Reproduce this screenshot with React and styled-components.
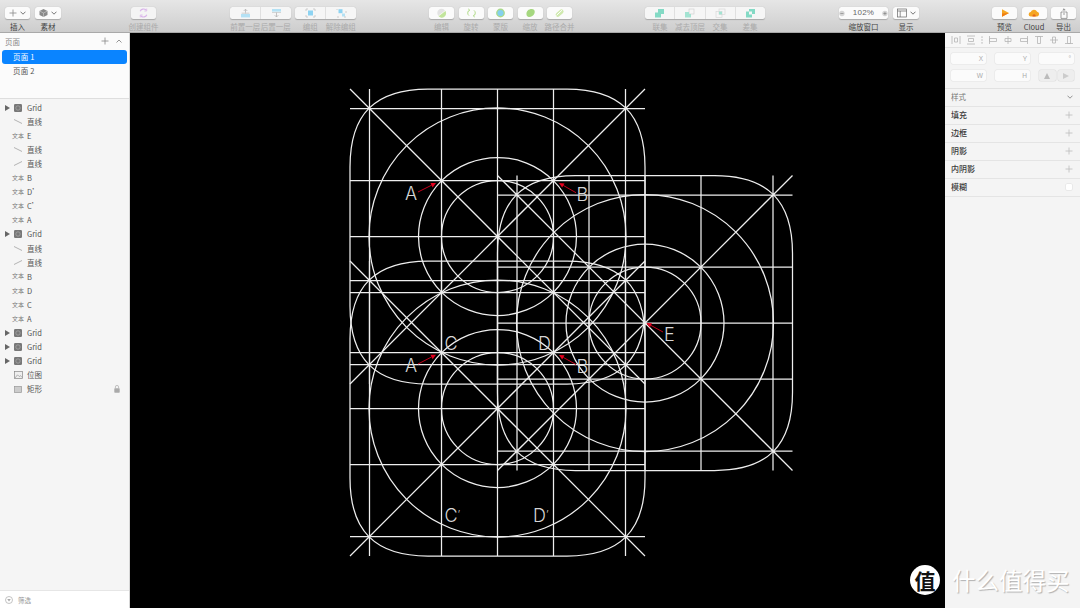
import React from 'react';
import styled, { createGlobalStyle } from 'styled-components';

const Global = createGlobalStyle`
  html, body { margin: 0; padding: 0; background: #000; overflow: hidden; }
  body { font-family: "Liberation Sans", "Noto Sans CJK SC", sans-serif; }
  * { box-sizing: border-box; }
`;

const Window = styled.div`
  width: 1080px; height: 608px; display: flex; flex-direction: column; position: relative; overflow: hidden;
`;
const Toolbar = styled.header`
  height: 33px; flex: none; display: flex; padding-left: 5px;
  background: linear-gradient(#e6e6e6, #cdcdcd);
  border-bottom: 1px solid #a9a9a9;
`;
const Tool = styled.div`
  flex: none; width: ${p => p.$w}px; margin-left: ${p => p.$ml || 0}px;
  display: flex; flex-direction: column; align-items: stretch; padding-top: 7px;
`;
const ToolButton = styled.div`
  height: 12px; display: flex; align-items: center; justify-content: center; gap: 3px;
  background: ${p => p.$dim ? '#f4f4f4' : '#fbfbfb'}; border-radius: 2.5px;
  box-shadow: 0 0.5px 1px rgba(0,0,0,.22);
`;
const Segmented = styled.div`
  height: 12px; display: flex; background: #f6f6f6; border-radius: 2.5px;
  box-shadow: 0 0.5px 1px rgba(0,0,0,.22);
`;
const Segment = styled.div`
  flex: 1; display: flex; align-items: center; justify-content: center;
  & + & { border-left: 1px solid #e0e0e0; }
`;
const ToolLabels = styled.div`
  display: flex; margin-top: 3px; height: 9px;
`;
const ToolLabel = styled.span`
  flex: 1; min-width: 0; display: flex; justify-content: center; white-space: nowrap;
  font: 7.5px/9px "Noto Sans CJK SC", sans-serif;
  color: ${p => p.$on ? '#444' : '#aaa'};
`;
const ZoomValue = styled.span`
  font: 8px/12px "Liberation Sans", sans-serif; color: #666; letter-spacing: .2px; margin: 0 5px;
`;

const Body = styled.div`
  flex: 1; min-height: 0; display: flex;
`;
const Sidebar = styled.aside`
  width: 130px; flex: none; display: flex; flex-direction: column; background: #f5f5f5;
  border-right: 1px solid #d6d6d6;
`;
const Pages = styled.section`
  height: 66px; flex: none; background: #fbfbfb; border-bottom: 1px solid #dedede; padding: 0 2px;
`;
const PagesHead = styled.div`
  height: 17px; padding: 0 5px 1px 3px; display: flex; align-items: center; justify-content: space-between;
  font: 7.5px "Noto Sans CJK SC", sans-serif; color: #888;
`;
const HeadIcons = styled.span`
  display: flex; gap: 7px; align-items: center;
`;
const PageRow = styled.div`
  height: 14px; border-radius: 3px; padding: 0 0 1px 11px;
  display: flex; align-items: center;
  font: 7.5px "Noto Sans CJK SC", sans-serif; letter-spacing: .2px;
  background: ${p => p.$active ? '#0a84ff' : 'transparent'};
  color: ${p => p.$active ? '#fff' : '#555'};
`;
const Layers = styled.div`
  flex: 1; padding-top: 1.5px; min-height: 0;
`;
const LayerRow = styled.div`
  height: 14.08px; display: flex; align-items: center; position: relative; padding-left: 5px;
`;
const Caret = styled.span`
  width: 8px; flex: none; display: flex;
`;
const LayerIcon = styled.span`
  width: 10px; margin-right: 4px; flex: none; display: flex; justify-content: center; align-items: center;
`;
const TextTag = styled.span`
  font: 6px/1 "Noto Sans CJK SC", sans-serif; color: #777; white-space: nowrap;
`;
const LayerName = styled.span`
  font: 7.5px/1 "Noto Sans CJK SC", "Liberation Sans", sans-serif; color: #555; flex: 1; white-space: nowrap;
`;
const LockSlot = styled.span`
  display: flex; margin-right: 9px;
`;
const Filter = styled.div`
  height: 18px; flex: none; background: #fff; border-top: 1px solid #e6e6e6; padding-left: 5px;
  display: flex; align-items: center; gap: 5px;
  font: 6.5px "Noto Sans CJK SC", sans-serif; color: #999;
`;

const Canvas = styled.main`
  flex: 1; background: #000; position: relative; min-width: 0;
`;
const Drawing = styled.svg`
  display: block; width: 815px; height: 575px;
`;
const LetterGroup = styled.g`
  opacity: 0.97;
`;
const Letter = styled.text`
  font-family: Inter, "Liberation Sans", sans-serif; font-weight: 300; font-size: 18px; fill: #dcdcdc;
`;
const Prime = styled.tspan`
  font-size: 11px;
`;

const Inspector = styled.aside`
  width: 135px; flex: none; background: #f4f4f4; display: flex; flex-direction: column;
`;
const AlignBar = styled.div`
  height: 15px; flex: none; border-bottom: 1px solid #e2e2e2; display: flex; align-items: center;
  padding-left: 3px; background: #f7f7f7;
`;
const AlignCell = styled.span`
  width: 15.3px; flex: none; display: flex; justify-content: center;
`;
const AlignDivider = styled.span`
  width: 6.7px; flex: none; display: flex; justify-content: center;
`;
const Geometry = styled.div`
  height: 41px; flex: none; border-bottom: 1px solid #e2e2e2; padding: 5px 6px 0 6px;
  display: grid; grid-template-columns: 35px 35px 35px; column-gap: 9px; row-gap: 6px; grid-auto-rows: 11px;
`;
const Field = styled.div`
  background: #fbfbfb; border-radius: 2px; box-shadow: 0 0 0 .5px #e3e3e3;
  display: flex; align-items: center; justify-content: flex-end; padding-right: 3px;
  font: 6.5px "Liberation Sans", sans-serif; color: #aaa;
`;
const FlipPair = styled.div`
  display: flex; gap: 2px;
`;
const FlipButton = styled.div`
  flex: 1; display: flex; align-items: center; justify-content: center; background: #eee;
  border-radius: 2px; box-shadow: 0 0 0 .5px #ddd;
`;
const PropRow = styled.div`
  height: 18px; flex: none; border-bottom: 1px solid #e4e4e4; padding: 0 7px 1.5px 6px;
  display: flex; align-items: center; justify-content: space-between;
  font: ${p => p.$head ? '400 7.5px' : '500 8px'} "Noto Sans CJK SC", sans-serif;
  color: ${p => p.$head ? '#777' : '#3a3a3a'};
`;
const Checkbox = styled.span`
  width: 6px; height: 6px; border-radius: 1px; background: #fff; box-shadow: 0 0 0 .5px #ddd; margin-right: 1px;
`;

const Badge = styled.div`
  position: absolute; left: 910px; top: 565px; width: 30px; height: 30px; border-radius: 50%;
  background: #fff; color: #111; display: flex; align-items: center; justify-content: center;
  font: 700 21px/1 "Noto Sans CJK SC", sans-serif;
`;
const Watermark = styled.div`
  position: absolute; left: 952px; top: 566px; white-space: nowrap; color: #fff;
  font: 400 23.5px/28px "Noto Sans CJK SC", sans-serif;
  text-shadow: 1px 1px 1px rgba(0,0,0,.28);
`;

const Plus = ({ c = '#bdbdbd', s = 8 }) => (
  <svg width={s} height={s} viewBox="0 0 8 8"><path d="M4 .5v7M.5 4h7" stroke={c} strokeWidth=".8" /></svg>
);
const Chevron = ({ c = '#666', up }) => (
  <svg width="6" height="4" viewBox="0 0 6 4"><path d={up ? 'M.5 3.5 3 1l2.5 2.5' : 'M.5 .7 3 3.2 5.5 .7'} fill="none" stroke={c} strokeWidth=".9" /></svg>
);
const Ic = ({ children, w = 11, h = 10 }) => <svg width={w} height={h} viewBox={`0 0 ${w} ${h}`}>{children}</svg>;

const icons = {
  box: <Ic w={9}><path d="M4.5 1 8.5 3v4l-4 2-4-2V3z" fill="#8a8a8a" /><path d="M.5 3l4 2 4-2M4.5 5v4" stroke="#ddd" strokeWidth=".5" fill="none" /></Ic>,
  symbol: <Ic><path d="M2.2 3.2A3.6 3.6 0 0 1 8 2M8.8 6.8A3.6 3.6 0 0 1 3 8" fill="none" stroke="#d9b3ea" strokeWidth="1.2" /><path d="M8.7 .6v2.4H6.4M2.3 9.4V7h2.3" fill="none" stroke="#d9b3ea" strokeWidth=".8" /></Ic>,
  forward: <Ic><rect x="1" y="6" width="9" height="3.4" fill="#b4e1f4" /><path d="M5.5 6V1.2M3.7 3l1.8-1.8L7.3 3" fill="none" stroke="#b5b5b5" strokeWidth=".8" /><rect x="1.6" y="4.6" width="7.8" height="1.2" fill="#d4d4d4" /></Ic>,
  backward: <Ic><rect x="1" y="1" width="9" height="2.6" fill="#b4e1f4" /><rect x="1" y="4" width="9" height="1" fill="#d4d4d4" /><path d="M5.5 4.6V9M3.7 7.2 5.5 9l1.8-1.8" fill="none" stroke="#b5b5b5" strokeWidth=".8" /></Ic>,
  group: <Ic><rect x="3" y="2.5" width="5" height="5" fill="#8dd3f2" /><path d="M1 1h2M8 1h2M1 9h2M8 9h2M1 1v2M10 1v2M1 7v2M10 7v2" stroke="#c4c4c4" strokeWidth=".8" fill="none" /></Ic>,
  ungroup: <Ic><rect x="2.5" y="1.2" width="4" height="4" fill="#8dd3f2" /><rect x="6" y="5.5" width="3" height="3" fill="#b4e1f4" /><path d="M1 1v1M1 9h2M10 3v2M10 9H8" stroke="#c4c4c4" strokeWidth=".8" fill="none" /></Ic>,
  edit: <Ic><circle cx="5.5" cy="5" r="4.2" fill="#e3e3e3" /><path d="M9.2 2.8A4.2 4.2 0 0 1 2.4 8z" fill="#c2e59c" /><path d="M2.4 8 9.2 2.8" stroke="#fff" strokeWidth=".7" /></Ic>,
  rotate: <Ic><path d="M3 2.4A3.3 3.3 0 0 0 3 7.6M8 2.4A3.3 3.3 0 0 1 8 7.6" fill="none" stroke="#b4dd8d" strokeWidth="1" /><path d="M2 .8l2 1.4-2 1.4M9 6.4 7 7.8l2 1.4" fill="none" stroke="#b4dd8d" strokeWidth=".8" /></Ic>,
  mask: <Ic><circle cx="5.5" cy="5" r="4.4" fill="#a9d98b" /><circle cx="5.5" cy="5" r="3.1" fill="#84d0ee" /></Ic>,
  scale: <Ic><path d="M1.5 6.5C1 3 4 .8 7 1c2.6.2 3.3 2.6 2.4 4.6C8.4 8.2 5 9.6 3 8.7 2 8.3 1.6 7.6 1.5 6.5z" fill="#a5d77f" /></Ic>,
  flatten: <Ic><rect x="1" y="3" width="9" height="4.4" rx="2.2" transform="rotate(-40 5.5 5)" fill="#cfe9ae" /><path d="M2.5 7.4 8 2.2" stroke="#fff" strokeWidth="1" /></Ic>,
  union: <Ic><path d="M4 1h6v5H7v3.4H1v-5h3z" fill="#84dac5" /></Ic>,
  subtract: <Ic><rect x="5" y="1" width="5" height="5" fill="none" stroke="#ccc" strokeWidth=".6" /><path d="M1 4h4v2h2v3.4H1z" fill="#a3e3d2" /></Ic>,
  intersect: <Ic><rect x="1" y="3.6" width="6" height="5.8" fill="none" stroke="#d4d4d4" strokeWidth=".6" /><rect x="4" y="1" width="6" height="5.4" fill="none" stroke="#d4d4d4" strokeWidth=".6" /><rect x="4" y="3.6" width="3" height="2.8" fill="#a3e3d2" /></Ic>,
  difference: <Ic><path d="M4 1h6v5H7V3.6H4zM1 3.6h3v2.8h3v3H1z" fill="#84dac5" /></Ic>,
  layout: <Ic w={10}><rect x=".5" y="1" width="9" height="8" fill="none" stroke="#666" strokeWidth=".7" /><path d="M.5 3h9M3.2 3v6" stroke="#666" strokeWidth=".7" /></Ic>,
  play: <Ic w={10} h={10}><path d="M2 1.2 9 5 2 8.8z" fill="#f5a623" /><path d="M2 5.5 9 5 2 8.8z" fill="#f17e13" /></Ic>,
  cloud: <Ic w={12} h={10}><path d="M3 8.5a2.2 2.2 0 0 1-.3-4.4 3.4 3.4 0 0 1 6.4-.3A2.4 2.4 0 0 1 9.3 8.5z" fill="#f5a623" /><path d="M4.6 8.5a1.6 1.6 0 1 1 3 0z" fill="#e8641b" /></Ic>,
  share: <Ic w={8} h={11}><path d="M1 4h1.8M5.2 4H7v6.4H1V4" fill="none" stroke="#777" strokeWidth=".7" /><path d="M4 7V.8M2.6 2.2 4 .8l1.4 1.4" fill="none" stroke="#777" strokeWidth=".7" /></Ic>,
};

const Minus = ({ plus }) => (
  <svg width="7" height="7" viewBox="0 0 7 7"><circle cx="3.5" cy="3.5" r="3.2" fill="#d4d4d4" /><path d={plus ? 'M1.6 3.5h3.8M3.5 1.6v3.8' : 'M1.6 3.5h3.8'} stroke="#777" strokeWidth=".7" /></svg>
);

const Single = ({ w, ml, label, on, dim, children }) => (
  <Tool $w={w} $ml={ml}>
    <ToolButton $dim={dim}>{children}</ToolButton>
    <ToolLabels><ToolLabel $on={on}>{label}</ToolLabel></ToolLabels>
  </Tool>
);
const Multi = ({ w, ml, items }) => (
  <Tool $w={w} $ml={ml}>
    <Segmented>{items.map(i => <Segment key={i.label}>{icons[i.icon]}</Segment>)}</Segmented>
    <ToolLabels>{items.map(i => <ToolLabel key={i.label}>{i.label}</ToolLabel>)}</ToolLabels>
  </Tool>
);

const HALF = 147.5;
const CORNER = 78;
const CTRL = 25;
const squircle = (cx, cy) => {
  const l = cx - HALF, r = cx + HALF, t = cy - HALF, b = cy + HALF;
  return `M${l + CORNER} ${t}H${r - CORNER}C${r - CTRL} ${t} ${r} ${t + CTRL} ${r} ${t + CORNER}`
    + `V${b - CORNER}C${r} ${b - CTRL} ${r - CTRL} ${b} ${r - CORNER} ${b}`
    + `H${l + CORNER}C${l + CTRL} ${b} ${l} ${b - CTRL} ${l} ${b - CORNER}`
    + `V${t + CORNER}C${l} ${t + CTRL} ${l + CTRL} ${t} ${l + CORNER} ${t}Z`;
};

const Grid = ({ cx, cy }) => {
  const offs = [-128, -56, 0, 56, 128];
  const d = [];
  offs.forEach(o => {
    d.push(`M${cx + o} ${cy - HALF}V${cy + HALF}`);
    d.push(`M${cx - HALF} ${cy + o}H${cx + HALF}`);
  });
  d.push(`M${cx - HALF} ${cy - HALF}L${cx + HALF} ${cy + HALF}`);
  d.push(`M${cx - HALF} ${cy + HALF}L${cx + HALF} ${cy - HALF}`);
  return (
    <g fill="none" stroke="#eee" strokeWidth="1.25">
      <path d={d.join('')} />
      <circle cx={cx} cy={cy} r="56" />
      <circle cx={cx} cy={cy} r="79" />
      <circle cx={cx} cy={cy} r="128.5" />
      <path d={squircle(cx, cy)} />
    </g>
  );
};

const Arrow = ({ x1, y1, x2, y2 }) => {
  const a = Math.atan2(y2 - y1, x2 - x1);
  const l = 5, w = 2.4;
  const bx = x2 - l * Math.cos(a), by = y2 - l * Math.sin(a);
  const p = `${x2},${y2} ${bx - w * Math.sin(a)},${by + w * Math.cos(a)} ${bx + w * Math.sin(a)},${by - w * Math.cos(a)}`;
  return (
    <g>
      <line x1={x1} y1={y1} x2={bx} y2={by} stroke="#c4001a" strokeWidth="1" />
      <polygon points={p} fill="#e8001f" />
    </g>
  );
};

const letters = [
  ['A', 405, 200], ['B', 576.5, 200.5], ['A', 405, 372], ['B', 576.5, 372.5], ['C', 444.5, 350],
  ['D', 538, 350], ['E', 664, 341], ['C', 444.5, 522, true], ['D', 533, 522, true],
];
const arrows = [
  [418, 192, 436, 183], [576, 192.7, 559, 183], [418, 364, 436, 354.7], [576, 364.5, 559, 355], [663, 332, 646.5, 323],
];

const GridGlyph = () => (
  <svg width="8" height="8" viewBox="0 0 8 8"><rect width="8" height="8" rx="1.3" fill="#777" /><circle cx="4" cy="4" r="2.2" fill="none" stroke="#aaa" strokeWidth=".7" /></svg>
);
const LineGlyph = ({ up }) => (
  <svg width="8" height="5" viewBox="0 0 8 5"><path d={up ? 'M0 4.5 8 .5' : 'M0 .5 8 4.5'} stroke="#888" strokeWidth=".6" /></svg>
);
const ImageGlyph = () => (
  <svg width="9" height="8" viewBox="0 0 9 8"><rect x=".4" y=".4" width="8.2" height="7.2" fill="#eee" stroke="#888" strokeWidth=".7" /><path d="M1 7 3.5 3.8 5.3 5.6 6.5 4.6 8 6.4" fill="none" stroke="#888" strokeWidth=".6" /></svg>
);
const RectGlyph = () => (
  <svg width="8" height="7" viewBox="0 0 8 7"><rect x=".4" y=".4" width="7.2" height="6.2" fill="#ccc" stroke="#999" strokeWidth=".7" /></svg>
);
const LockGlyph = () => (
  <svg width="6" height="8" viewBox="0 0 6 8"><rect x=".3" y="3.3" width="5.4" height="4.4" rx=".6" fill="#aaa" /><path d="M1.4 3.3V2a1.6 1.6 0 0 1 3.2 0v1.3" fill="none" stroke="#aaa" strokeWidth=".7" /></svg>
);

const layers = [
  ['grid', 'Grid'], ['down', '直线'], ['text', 'E'], ['down', '直线'], ['up', '直线'], ['text', 'B'], ['text', 'D’'],
  ['text', 'C’'], ['text', 'A'], ['grid', 'Grid'], ['down', '直线'], ['up', '直线'], ['text', 'B'], ['text', 'D'],
  ['text', 'C'], ['text', 'A'], ['grid', 'Grid'], ['grid', 'Grid'], ['grid', 'Grid'], ['image', '位图'], ['rect', '矩形'],
];

const Layer = ({ kind, name, locked }) => (
  <LayerRow>
    <Caret>{kind === 'grid' && <svg width="5" height="6" viewBox="0 0 5 6"><path d="M0 0 5 3 0 6z" fill="#666" /></svg>}</Caret>
    <LayerIcon>
      {kind === 'grid' && <GridGlyph />}
      {kind === 'down' && <LineGlyph />}
      {kind === 'up' && <LineGlyph up />}
      {kind === 'text' && <TextTag>文本</TextTag>}
      {kind === 'image' && <ImageGlyph />}
      {kind === 'rect' && <RectGlyph />}
    </LayerIcon>
    <LayerName>{name}</LayerName>
    {locked && <LockSlot><LockGlyph /></LockSlot>}
  </LayerRow>
);

const alignPaths = [
  'M1 1v8M9 1v8M3.5 3h3v4h-3z', 'M1 1h8M1 9h8M2.5 3.5h5v3h-5z', null, 'M1.5 1v8M1.5 3.5h7v3h-7z', 'M5 1v8M2 3.5h6v3H2z',
  'M8.5 1v8M1.5 3.5h7v3h-7z', 'M1 1.5h8M3.5 1.5h3v7h-3z', 'M1 5h8M3.5 2h3v6h-3z', 'M1 8.5h8M3.5 1.5h3v7h-3z',
];

export default function App() {
  return (
    <Window>
      <Global />
      <Toolbar>
        <Single w={25} label="插入" on>
          <Plus c="#888" /><Chevron />
        </Single>
        <Single w={26} ml={5} label="素材" on>
          {icons.box}<Chevron />
        </Single>
        <Single w={25} ml={70} label="创建组件" dim>{icons.symbol}</Single>
        <Multi w={61} ml={74} items={[{ icon: 'forward', label: '前置一层' }, { icon: 'backward', label: '后置一层' }]} />
        <Multi w={61} ml={4} items={[{ icon: 'group', label: '编组' }, { icon: 'ungroup', label: '解除编组' }]} />
        <Single w={25} ml={73} label="编辑">{icons.edit}</Single>
        <Single w={25} ml={4.5} label="旋转">{icons.rotate}</Single>
        <Single w={25} ml={4.5} label="蒙版">{icons.mask}</Single>
        <Single w={25} ml={4.5} label="缩放">{icons.scale}</Single>
        <Single w={25} ml={4.5} label="路径合并">{icons.flatten}</Single>
        <Multi w={120} ml={73} items={[
          { icon: 'union', label: '联集' }, { icon: 'subtract', label: '减去顶层' },
          { icon: 'intersect', label: '交集' }, { icon: 'difference', label: '差集' },
        ]} />
        <Tool $w={49} $ml={74}>
          <ToolButton><Minus /><ZoomValue>102%</ZoomValue><Minus plus /></ToolButton>
          <ToolLabels><ToolLabel $on>缩放窗口</ToolLabel></ToolLabels>
        </Tool>
        <Single w={26} ml={5} label="显示" on>{icons.layout}<Chevron /></Single>
        <Single w={25} ml={73} label="预览" on>{icons.play}</Single>
        <Single w={25} ml={4.5} label="Cloud" on>{icons.cloud}</Single>
        <Single w={25} ml={4.5} label="导出" on>{icons.share}</Single>
      </Toolbar>
      <Body>
        <Sidebar>
          <Pages>
            <PagesHead>页面<HeadIcons><Plus c="#888" /><Chevron c="#888" up /></HeadIcons></PagesHead>
            <PageRow $active>页面 1</PageRow>
            <PageRow>页面 2</PageRow>
          </Pages>
          <Layers>
            {layers.map(([k, n], i) => <Layer key={i} kind={k} name={n} locked={k === 'rect'} />)}
          </Layers>
          <Filter>
            <svg width="8" height="8" viewBox="0 0 8 8"><circle cx="4" cy="4" r="3.5" fill="none" stroke="#aaa" strokeWidth=".7" /><path d="M2.2 3h3.6L4 5.4z" fill="#aaa" /></svg>
            筛选
          </Filter>
        </Sidebar>
        <Canvas>
          <Drawing viewBox="130 33 815 575">
            <Grid cx={497.5} cy={236.5} />
            <Grid cx={497.5} cy={408.5} />
            <Grid cx={645} cy={323} />
            {arrows.map((a, i) => <Arrow key={i} x1={a[0]} y1={a[1]} x2={a[2]} y2={a[3]} />)}
            <LetterGroup>
              {letters.map(([t, x, y, prime], i) => (
                <Letter key={i} x={x} y={y}>{t}{prime && <Prime dy="-3">’</Prime>}</Letter>
              ))}
            </LetterGroup>
          </Drawing>
        </Canvas>
        <Inspector>
          <AlignBar>
            {alignPaths.map((d, i) => d
              ? <AlignCell key={i}><svg width="10" height="10" viewBox="0 0 10 10"><path d={d} fill="none" stroke="#b5b5b5" strokeWidth=".8" /></svg></AlignCell>
              : <AlignDivider key={i}><svg width="2" height="8" viewBox="0 0 2 8"><path d="M1 .5v1.2M1 3.4v1.2M1 6.3v1.2" stroke="#999" strokeWidth=".9" /></svg></AlignDivider>)}
          </AlignBar>
          <Geometry>
            <Field>X</Field>
            <Field>Y</Field>
            <Field>°</Field>
            <Field>W</Field>
            <Field>H</Field>
            <FlipPair>
              <FlipButton><svg width="8" height="8" viewBox="0 0 8 8"><path d="M4 1 7 7H1z" fill="#bbb" /></svg></FlipButton>
              <FlipButton><svg width="8" height="8" viewBox="0 0 8 8"><path d="M1 1 7 4 1 7z" fill="#ccc" /></svg></FlipButton>
            </FlipPair>
          </Geometry>
          <PropRow $head>样式<Chevron c="#888" /></PropRow>
          <PropRow>填充<Plus /></PropRow>
          <PropRow>边框<Plus /></PropRow>
          <PropRow>阴影<Plus /></PropRow>
          <PropRow>内阴影<Plus /></PropRow>
          <PropRow>模糊<Checkbox /></PropRow>
        </Inspector>
      </Body>
      <Badge>值</Badge>
      <Watermark>什么值得买</Watermark>
    </Window>
  );
}
